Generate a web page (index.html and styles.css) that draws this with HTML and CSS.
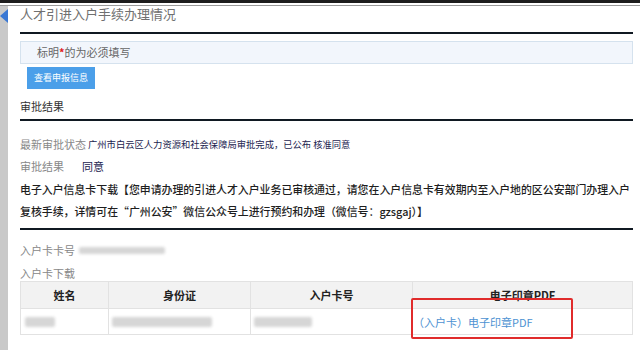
FILE: index.html
```html
<!DOCTYPE html>
<html lang="zh-CN">
<head>
<meta charset="utf-8">
<link rel="stylesheet" href="styles.css">
</head>
<body>
<div class="topbar"></div>
<div class="layout">
  <aside class="strip"><span class="strip-arrow"></span></aside>
  <main class="content">
    <h1 class="title">人才引进入户手续办理情况</h1>
    <div class="rule"></div>
    <div class="notice">标明<span class="req">*</span>的为必须填写</div>
    <button class="btn">查看申报信息</button>
    <h2 class="section">审批结果</h2>
    <div class="rule rule-tight"></div>
    <div class="row row-status"><span class="label">最新审批状态</span><span class="value value-small">广州市白云区人力资源和社会保障局审批完成，已公布 核准同意</span></div>
    <div class="row row-result"><span class="label label-wide">审批结果</span><span class="value">同意</span></div>
    <p class="para">电子入户信息卡下载【您申请办理的引进人才入户业务已审核通过，请您在入户信息卡有效期内至入户地的区公安部门办理入户复核手续，详情可在“广州公安”微信公众号上进行预约和办理（微信号：gzsgaj）】</p>
    <div class="rule rule-para"></div>
    <div class="row row-card"><span class="label">入户卡卡号</span><span class="blur blur-card"></span></div>
    <div class="row row-download"><span class="label">入户卡下载</span></div>
    <table class="grid">
      <thead>
        <tr>
          <th class="col-name">姓名</th>
          <th class="col-id">身份证</th>
          <th class="col-card">入户卡号</th>
          <th class="col-pdf">电子印章PDF</th>
        </tr>
      </thead>
      <tbody>
        <tr>
          <td><span class="blur blur-name"></span></td>
          <td><span class="blur blur-id"></span></td>
          <td><span class="blur blur-num"></span></td>
          <td class="pdf-cell"><a class="pdf-link" href="#">（入户卡）电子印章PDF</a><span class="highlight"></span></td>
        </tr>
      </tbody>
    </table>
  </main>
</div>
</body>
</html>
```

FILE: styles.css
```css
* { box-sizing: border-box; }
html, body { margin: 0; padding: 0; background: #fff; }
body {
  width: 640px;
  height: 350px;
  overflow: hidden;
  font-family: "Noto Sans CJK SC", "Liberation Sans", sans-serif;
  color: #333;
}
.topbar {
  height: 6px;
  border-top: 3px solid #1d1d1d;
  border-bottom: 1px solid #9a9a9a;
  background: #fff;
}
.layout {
  display: flex;
  height: 344px;
}
.strip {
  width: 8px;
  flex: none;
  background: #c9c9c9;
  position: relative;
}
.strip-arrow {
  position: absolute;
  left: 0;
  top: 3px;
  width: 0;
  height: 0;
  border-top: 7px solid transparent;
  border-bottom: 7px solid transparent;
  border-right: 8px solid #3a78d4;
}
.content {
  width: 625px;
  padding-left: 12px;
  display: flex;
  flex-direction: column;
  align-items: stretch;
}
.title {
  margin: 0;
  font-size: 13px;
  line-height: 18px;
  font-weight: normal;
  color: #707070;
  margin-top: -1px;
}
.rule {
  height: 2px;
  background: #101922;
  margin-top: 9px;
}
.notice {
  margin-top: 7px;
  height: 23px;
  background: #f2f6fc;
  border: 1px solid #d5e2ee;
  padding-left: 16px;
  font-size: 11px;
  line-height: 21px;
  color: #666;
}
.req { color: #e0201c; font-weight: bold; }
.btn {
  align-self: flex-start;
  margin: 3px 0 0 7px;
  width: 68px;
  height: 22px;
  padding: 0;
  border: none;
  background: #4b9fe9;
  color: #fff;
  font-family: inherit;
  font-size: 9px;
  line-height: 22px;
}
.section {
  margin: 9px 0 0;
  font-size: 11px;
  line-height: 16px;
  font-weight: normal;
  color: #333;
}
.rule-tight { margin-top: 5px; }
.row {
  display: flex;
  align-items: center;
  height: 16px;
  font-size: 11px;
  line-height: 16px;
}
.label { color: #888; }
.label-wide { width: 62px; }
.value { color: #1c2450; }
.value-small { font-size: 9.3px; margin-left: 2px; }
.row-status { margin-top: 15px; }
.row-result { margin-top: 6px; }
.para {
  margin: 4px -2px 0 0;
  font-size: 10.9px;
  line-height: 22px;
  color: #1e1e1e;
  font-weight: 500;
}
.rule-para { margin-top: 6px; }
.row-card { margin-top: 12px; }
.row-download { margin-top: 7px; }
.blur {
  display: inline-block;
  height: 7px;
  background: #d6d6d6;
  filter: blur(1.8px);
  border-radius: 2px;
}
.blur-card { width: 86px; margin-left: 4px; }
.grid {
  margin-top: 0;
  width: 613px;
  border-collapse: collapse;
  font-size: 11px;
  table-layout: fixed;
}
.grid th, .grid td {
  border: 1px solid #e2e2e2;
  padding: 0 3px;
}
.grid th {
  height: 27px;
  background: #f2f2f2;
  color: #222;
  font-weight: bold;
  text-align: center;
}
.grid td {
  height: 26px;
  text-align: left;
}
.col-name { width: 88px; }
.col-id { width: 142px; }
.col-card { width: 162px; }
.blur-name { width: 30px; height: 10px; margin-left: 1px; }
.blur-id { width: 100px; height: 10px; }
.blur-num { width: 58px; height: 10px; }
.pdf-cell {
  position: relative;
  padding-left: 0 !important;
}
.pdf-link {
  color: #4d92d2;
  text-decoration: none;
}
.highlight {
  position: absolute;
  left: -2px;
  top: -11px;
  width: 162px;
  height: 41px;
  border: 2px solid #e02b2b;
  border-radius: 2px;
  pointer-events: none;
}
```
